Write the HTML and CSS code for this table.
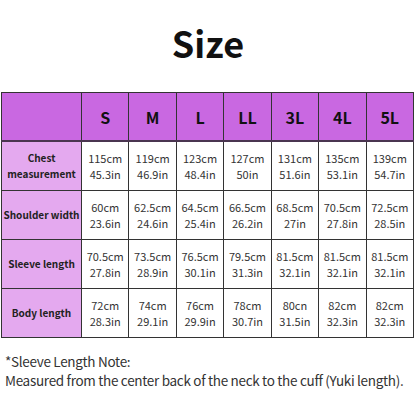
FILE: index.html
```html
<!DOCTYPE html>
<html lang="ja">
<head>
  <meta charset="UTF-8" />
  <title>Size</title>
  <link rel="stylesheet" href="styles.css">
</head>
<body>
  <div class="title">
    <h1>Size</h1>
  </div>

  <table class="size-table">
    <tr class="head">
      <th class="corner"></th>
      <th>S</th>
      <th>M</th>
      <th>L</th>
      <th>LL</th>
      <th>3L</th>
      <th>4L</th>
      <th>5L</th>
    </tr>
    <tr>
      <td class="label">Chest<br>measurement</td>
      <td>115cm<br>45.3in</td>
      <td>119cm<br>46.9in</td>
      <td>123cm<br>48.4in</td>
      <td>127cm<br>50in</td>
      <td>131cm<br>51.6in</td>
      <td>135cm<br>53.1in</td>
      <td>139cm<br>54.7in</td>
    </tr>
    <tr>
      <td class="label">Shoulder width</td>
      <td>60cm<br>23.6in</td>
      <td>62.5cm<br>24.6in</td>
      <td>64.5cm<br>25.4in</td>
      <td>66.5cm<br>26.2in</td>
      <td>68.5cm<br>27in</td>
      <td>70.5cm<br>27.8in</td>
      <td>72.5cm<br>28.5in</td>
    </tr>
    <tr>
      <td class="label">Sleeve length</td>
      <td>70.5cm<br>27.8in</td>
      <td>73.5cm<br>28.9in</td>
      <td>76.5cm<br>30.1in</td>
      <td>79.5cm<br>31.3in</td>
      <td>81.5cm<br>32.1in</td>
      <td>81.5cm<br>32.1in</td>
      <td>81.5cm<br>32.1in</td>
    </tr>
    <tr>
      <td class="label">Body length</td>
      <td>72cm<br>28.3in</td>
      <td>74cm<br>29.1in</td>
      <td>76cm<br>29.9in</td>
      <td>78cm<br>30.7in</td>
      <td>80cn<br>31.5in</td>
      <td>82cm<br>32.3in</td>
      <td>82cm<br>32.3in</td>
    </tr>
  </table>

  <div class="note">
    <p>*Sleeve Length Note:</p>
    <p>Measured from the center back of the neck to the cuff (Yuki length).</p>
  </div>
</body>
</html>
```

FILE: styles.css
```css
body {
  margin: 0;
  background-color: #fff;
  color: #222;
  font-family: "Noto Sans CJK JP", "Noto Sans", sans-serif;
}

.title {
  height: 92px;
  display: flex;
  justify-content: center;
  align-items: center;
}

.title h1 {
  margin: 0;
  font-size: 36px;
  font-weight: 700;
  color: #111;
  line-height: 1;
  padding-bottom: 8px;
}

.size-table {
  border-collapse: collapse;
  table-layout: fixed;
  width: 413px;
  margin-left: 1px;
}

.size-table th,
.size-table td {
  border: 1.5px solid #333;
  text-align: center;
  vertical-align: middle;
  padding: 0;
}

.size-table td {
  height: 48px;
  font-size: 11px;
  line-height: 16px;
  color: #333;
}

.head th {
  height: 47px;
  background-color: #c968e1;
  font-size: 16px;
  font-weight: 700;
  color: #111;
  border-bottom: 2px solid #4a3550;
}

.head th.corner {
  width: 79px;
}

.size-table td.label {
  background-color: #e4a9ef;
  font-size: 10px;
  line-height: 16px;
  font-weight: 700;
  color: #222;
}

.note {
  margin-top: 14px;
  padding-left: 5px;
  font-size: 13.5px;
  letter-spacing: -0.3px;
  line-height: 19px;
  color: #333;
  white-space: nowrap;
}

.note p {
  margin: 0;
}
```
